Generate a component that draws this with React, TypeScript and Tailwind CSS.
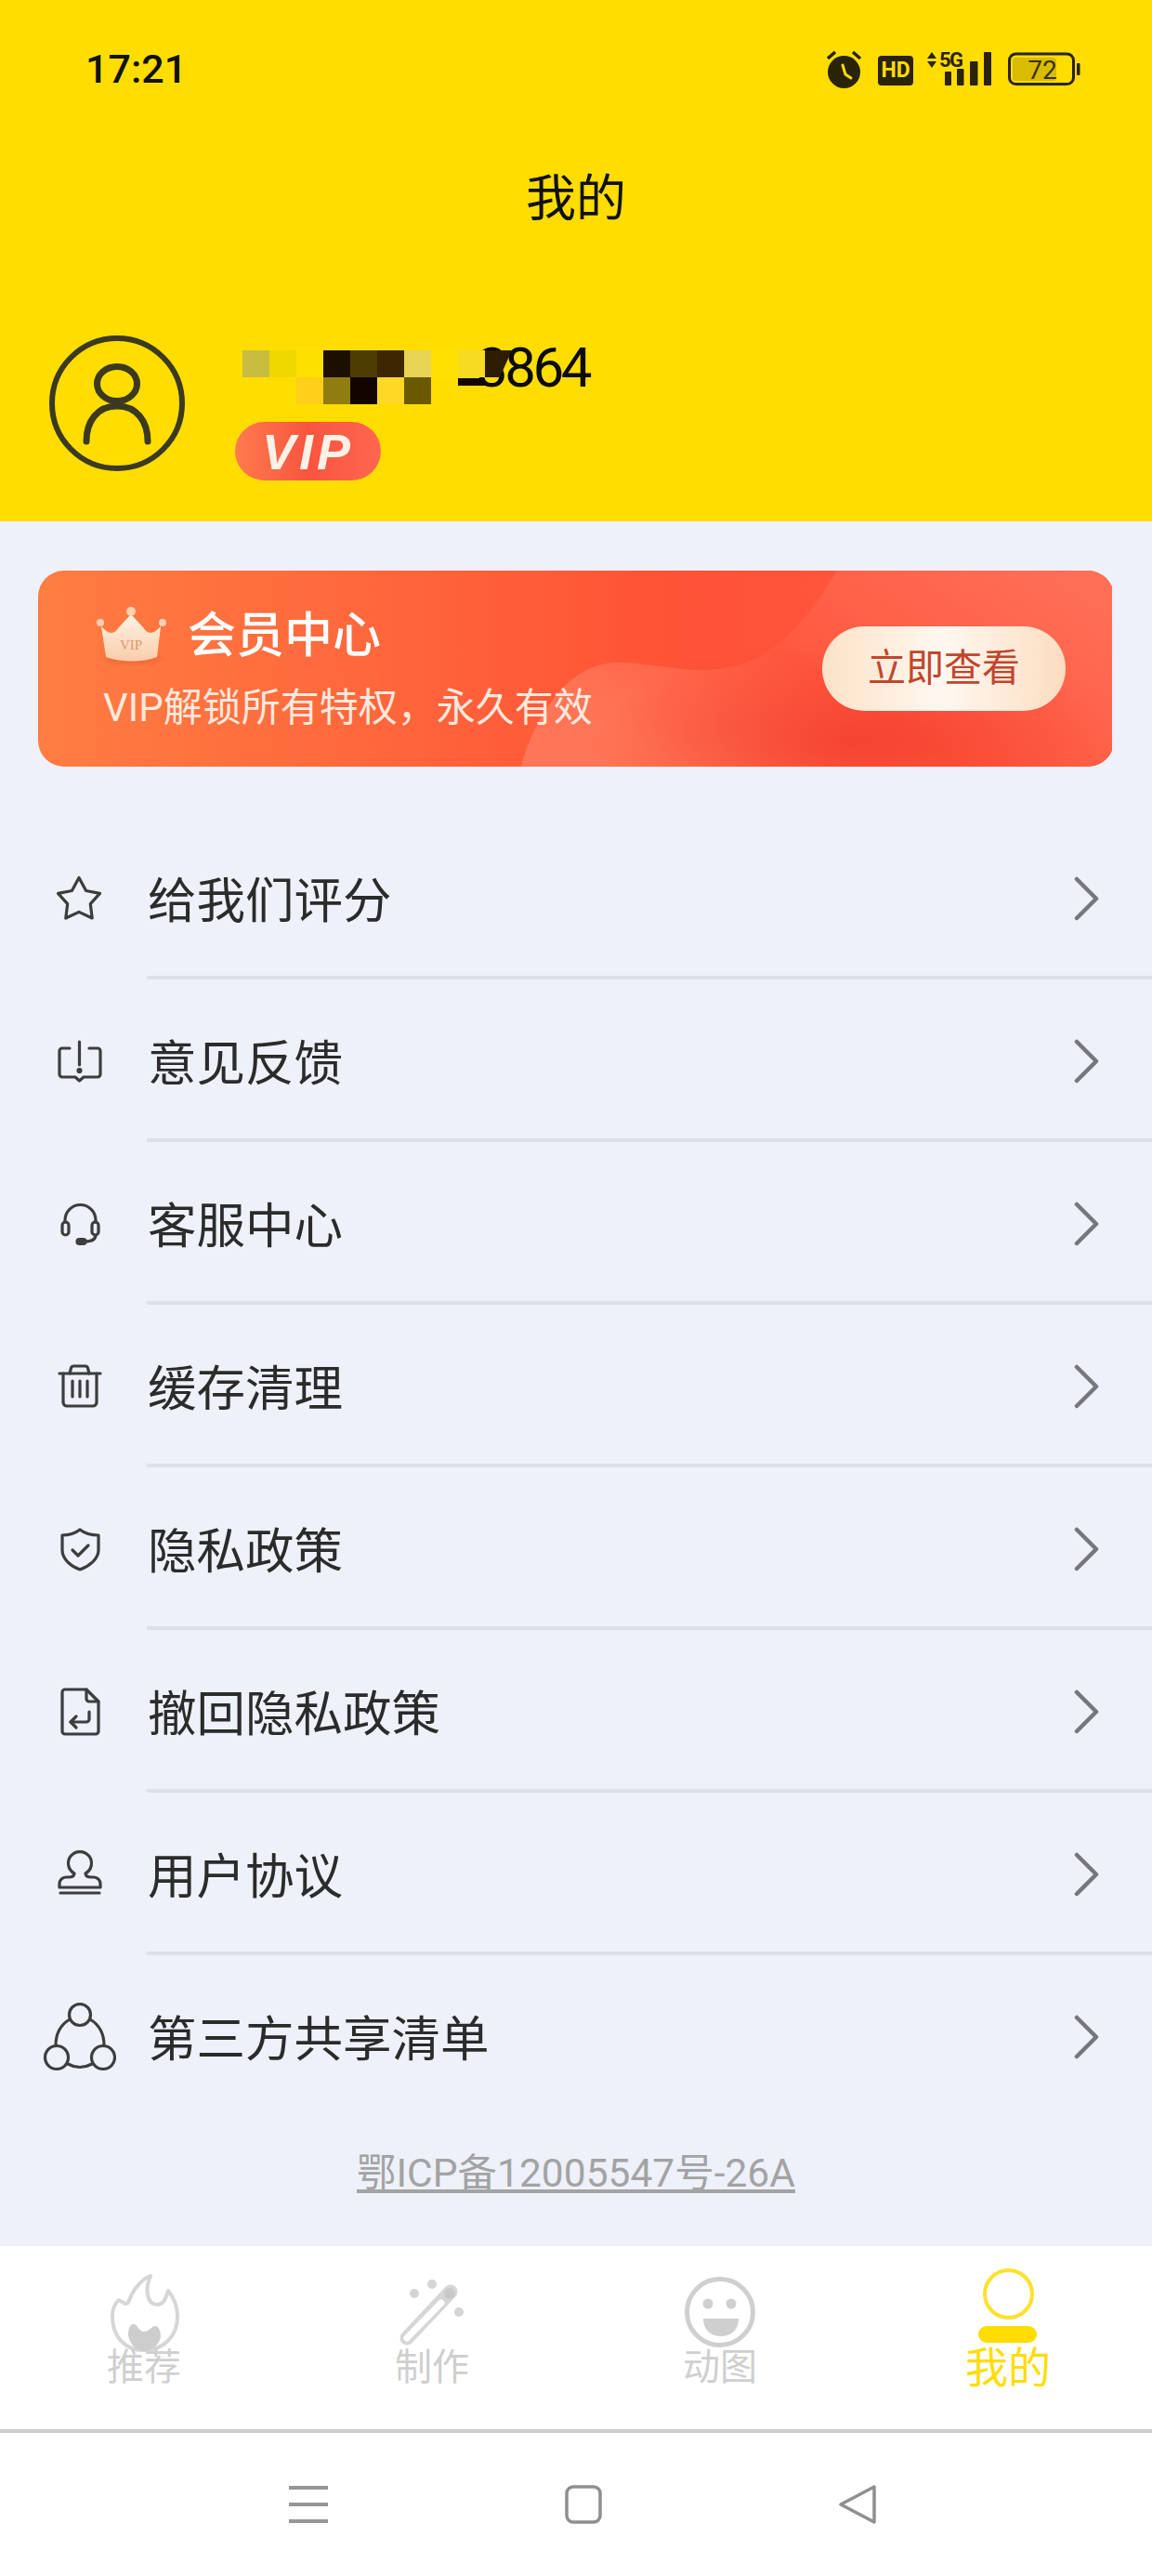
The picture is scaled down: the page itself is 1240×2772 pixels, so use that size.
import type { ReactNode } from "react";

const iconProps = { width: 80, height: 80, viewBox: "0 0 80 80", fill: "none", stroke: "#3d3d3d", strokeWidth: 3.2, strokeLinecap: "round", strokeLinejoin: "round" } as const;

const menu: { label: string; icon: ReactNode }[] = [
  { label: "给我们评分", icon: <svg {...iconProps}><path d="M40 16.5 47.6 30.5 62.5 33.4 52.3 44.6 54.2 60 40 53.4 25.8 60 27.7 44.6 17.5 33.4 32.4 30.5Z" /></svg> },
  {
    label: "意见反馈",
    icon: (
      <svg {...iconProps}>
        <path d="M30 25H22a3 3 0 0 0-3 3v25a3 3 0 0 0 3 3h14l4.500 4 4.500-4h15a3 3 0 0 0 3-3V28a3 3 0 0 0-3-3H51" />
        <path d="M40.500 18V43" />
        <circle cx="40.500" cy="49" r="1.500" fill="#3d3d3d" />
      </svg>
    )
  },
  {
    label: "客服中心",
    icon: (
      <svg {...iconProps}>
        <path d="M25 37v-2a16.500 16.500 0 0 1 33 0v2" />
        <rect x="22" y="37" width="7" height="14" rx="3.500" />
        <rect x="54" y="37" width="7" height="14" rx="3.500" />
        <path d="M58 51c0 5-5 7-12 7" />
        <rect x="38" y="55.500" width="9" height="5" rx="2.500" fill="#3d3d3d" />
      </svg>
    )
  },
  {
    label: "缓存清理",
    icon: (
      <svg {...iconProps}>
        <path d="M19 25H63" />
        <path d="M30 25l1.500-6a3 3 0 0 1 3-2h12a3 3 0 0 1 3 2l1.500 6" />
        <path d="M23 25V56a4 4 0 0 0 4 4H55a4 4 0 0 0 4-4V25" />
        <path d="M33 33V50M41 33V50M49 33V50" />
      </svg>
    )
  },
  {
    label: "隐私政策",
    icon: (
      <svg {...iconProps}>
        <path d="M41 18C36 22 28 24 22 24V40C22 50 32 58 41 61 50 58 61 50 61 40V24C54 24 46 22 41 18Z" />
        <path d="M33 40 39 46 50 35" />
      </svg>
    )
  },
  {
    label: "撤回隐私政策",
    icon: (
      <svg {...iconProps}>
        <path d="M25 15H48L61 28V60a3 3 0 0 1-3 3H25a3 3 0 0 1-3-3V18a3 3 0 0 1 3-3Z" />
        <path d="M48 15V25a3 3 0 0 0 3 3H61" />
        <path d="M51 39V47a3 3 0 0 1-3 3H31" />
        <path d="M37 44 31 50 37 56" />
      </svg>
    )
  },
  {
    label: "用户协议",
    icon: (
      <svg {...iconProps}>
        <path d="M35 38A12.500 12.500 0 1 1 47 38C47 41 49 42 53 42H56a7 7 0 0 1 7 7V53H19V49a7 7 0 0 1 7-7H29C33 42 35 41 35 38Z" />
        <path d="M20 59H62" />
      </svg>
    )
  },
  {
    label: "第三方共享清单",
    icon: (
      <svg {...iconProps}>
        <circle cx="41" cy="15" r="11.500" />
        <circle cx="16" cy="61" r="12.500" />
        <circle cx="66" cy="61" r="12.500" />
        <path d="M30 20C20 26 15 35 15 48" />
        <path d="M52 20C62 26 67 35 67 48" />
        <path d="M28 68Q41 75 54 68" />
      </svg>
    )
  }
];

const mosaicTop = ["#C9BD3F", "#EFD800", "#FCE000", "#1C0F00", "#4D3D00", "#3D2600", "#E8D455", "#FFE000", "#F7DB20"];
const mosaicBottom = ["#FFDD00", "#FFDD00", "#FFCF1A", "#8F7D10", "#120500", "#FFD826", "#6B5900"];

function StatusIcons() {
  return (
    <svg width="273" height="44" viewBox="890 52 273 44" className="font-['Roboto',sans-serif]">
      <circle cx="908.500" cy="77.500" r="17.500" fill="#2a2306" />
      <path d="M891 63 899 56M926 63 918 56" stroke="#2a2306" strokeWidth="3.500" />
      <path d="M907 70 910 80 916 84" stroke="#FFDD00" strokeWidth="3" fill="none" strokeLinecap="round" />
      <rect x="945" y="60" width="38" height="32" rx="4" fill="#2a2306" />
      <text x="964" y="83" textAnchor="middle" fontSize="23" fontWeight="700" fill="#FFDD00">HD</text>
      <path d="M998 63 1003 56 1008 63ZM998 66 1008 66 1003 73Z" fill="#2a2306" />
      <text x="1011" y="72" fontSize="22" fontWeight="700" fill="#2a2306" letterSpacing="-1.500">5G</text>
      <rect x="1017" y="77" width="7" height="15" rx="1" fill="#2a2306" />
      <rect x="1030" y="74" width="7.500" height="18" rx="1" fill="#2a2306" />
      <rect x="1044" y="66" width="8.500" height="26" rx="1" fill="#2a2306" />
      <rect x="1059" y="56" width="8" height="36" rx="1" fill="#2a2306" />
      <rect x="1086.500" y="58" width="69" height="32.500" rx="7" fill="none" stroke="#2a2306" strokeWidth="3" />
      <rect x="1090" y="62" width="47" height="25" rx="3" fill="#D9BC00" />
      <text x="1122" y="85" textAnchor="middle" fontSize="28" fill="#3a3210">72</text>
      <rect x="1159" y="68" width="3.500" height="13" rx="1" fill="#2a2306" />
    </svg>
  );
}

function Avatar() {
  return (
    <svg width="146" height="146" viewBox="0 0 146 146" fill="none" stroke="#3b3a20" strokeLinecap="round" className="shrink-0">
      <circle cx="73" cy="73" r="70" strokeWidth="6" />
      <ellipse cx="73" cy="52" rx="21.500" ry="18.500" strokeWidth="7" />
      <path d="M40 114C40 92 52 76 73 76S106 92 106 114" strokeWidth="7" />
    </svg>
  );
}

function Crown() {
  return (
    <svg width="78" height="64" viewBox="0 0 78 64" className="shrink-0">
      <defs>
        <linearGradient id="crown" x1="0" y1="0" x2="0" y2="1">
          <stop offset="0" stopColor="#FFF3E4" />
          <stop offset="1" stopColor="#F8CDAA" />
        </linearGradient>
        <radialGradient id="crownShadow" cx="0.5" cy="0.5" r="0.5">
          <stop offset="0" stopColor="#D9552A" stopOpacity="0.7" />
          <stop offset="1" stopColor="#D9552A" stopOpacity="0" />
        </radialGradient>
      </defs>
      <ellipse cx="39" cy="56" rx="38" ry="8" fill="url(#crownShadow)" />
      <path d="M11 54 6 21C14 30 20 30 25 22L38 8 51 22C56 30 62 30 70 21L66 54C50 60 28 60 11 54Z" fill="url(#crown)" />
      <circle cx="38" cy="5" r="5" fill="#F9D2B2" />
      <circle cx="5" cy="17" r="4" fill="#F9D2B2" />
      <circle cx="72" cy="17" r="4" fill="#F9D2B2" />
      <text x="38" y="46" textAnchor="middle" fontSize="15" fill="#D99A70" className="font-['Liberation_Serif',serif]">VIP</text>
    </svg>
  );
}

function BannerArt() {
  return (
    <svg className="absolute inset-0" width="1156" height="211" viewBox="0 0 1156 211" preserveAspectRatio="none">
      <defs>
        <linearGradient id="base" x1="0" y1="0" x2="1" y2="0">
          <stop offset="0" stopColor="#FF7D42" />
          <stop offset="0.6" stopColor="#FF5236" />
          <stop offset="1" stopColor="#FF5A42" />
        </linearGradient>
        <linearGradient id="wave" x1="0.05" y1="0.6" x2="1" y2="0.1">
          <stop offset="0" stopColor="#FF7556" />
          <stop offset="0.4" stopColor="#FF5940" />
          <stop offset="1" stopColor="#FF6F58" />
        </linearGradient>
        <radialGradient id="spot" cx="0.5" cy="0.5" r="0.5">
          <stop offset="0" stopColor="#F23A2B" stopOpacity="0.75" />
          <stop offset="1" stopColor="#F23A2B" stopOpacity="0" />
        </radialGradient>
      </defs>
      <rect width="1156" height="211" fill="url(#base)" />
      <path d="M520 211C530 170 565 98 625 99 670 100 700 112 740 105 795 95 830 50 860 0H1156V211Z" fill="url(#wave)" />
      <ellipse cx="880" cy="185" rx="280" ry="110" fill="url(#spot)" />
    </svg>
  );
}

function FlameIcon() {
  return (
    <svg width="96" height="96" viewBox="0 0 96 96">
      <path d="M55 14C47 17 38 26 33 38 31 44 29 45 26 43L21 40C16 44 14 50 14 58 14 80 28 94 48 94 70 94 84 78 84 58 84 46 79 36 74 30 72 36 70 45 62 45 52 45 48 30 55 14Z" fill="#fff" stroke="#d6d6d6" strokeWidth="4" strokeLinejoin="round" />
      <path d="M31 78C31 70 33 66 37 66 41 66 42 74 48 74 54 74 56 68 60 68 64 68 66 74 66 80 64 88 56 95 48 95 40 95 33 88 31 78Z" fill="#cdcdcd" />
    </svg>
  );
}

function WandIcon() {
  return (
    <svg width="96" height="96" viewBox="0 0 96 96" fill="#d4d4d4">
      <path d="M68 31 21 81" stroke="#d6d6d6" strokeWidth="15" strokeLinecap="round" />
      <path d="M58 43 21 81" stroke="#fff" strokeWidth="7" strokeLinecap="round" />
      <circle cx="67" cy="33" r="6" fill="#c9c9c9" />
      <circle cx="29" cy="33" r="5" />
      <circle cx="48" cy="23" r="5" />
      <circle cx="77" cy="53" r="5" />
    </svg>
  );
}

function FaceIcon() {
  return (
    <svg width="96" height="96" viewBox="0 0 96 96">
      <circle cx="48" cy="53" r="35.500" fill="#fff" stroke="#cfcfcf" strokeWidth="5" />
      <circle cx="35" cy="44" r="5.500" fill="#cfcfcf" />
      <circle cx="60" cy="44" r="5.500" fill="#cfcfcf" />
      <path d="M30 60H68C68 72 60 79 49 79 38 79 30 72 30 60Z" fill="#cfcfcf" />
    </svg>
  );
}

function ProfileIcon() {
  return (
    <svg width="96" height="96" viewBox="0 0 96 96">
      <circle cx="48.500" cy="33.500" r="25.500" fill="none" stroke="#FFE02E" strokeWidth="4" />
      <rect x="16" y="68" width="63" height="18" rx="9" fill="#FFDD00" />
    </svg>
  );
}

const tabs = [
  { label: "推荐", icon: <FlameIcon />, active: false },
  { label: "制作", icon: <WandIcon />, active: false },
  { label: "动图", icon: <FaceIcon />, active: false },
  { label: "我的", icon: <ProfileIcon />, active: true }
];

export default function App() {
  return (
    <div className="flex h-[2772px] w-[1240px] flex-col overflow-hidden bg-[#EEF1F9] font-['Roboto','Noto_Sans_CJK_SC',sans-serif] text-[#2b2b2b]">
      <header className="h-[561px] shrink-0 bg-[#FFDD00]">
        <div className="flex h-[148px] items-center justify-between pl-[92px] pr-[77px]">
          <span className="text-[43px] font-medium leading-none text-[#111]">17:21</span>
          <StatusIcons />
        </div>
        <h1 className="flex h-[128px] items-center justify-center pt-[5px] text-[54px] font-normal leading-none text-[#111]">我的</h1>
        <div className="mt-[85px] flex pl-[53px]">
          <Avatar />
          <div className="ml-[54px] flex flex-col items-start">
            <div className="relative ml-[8px] mt-[4px] w-[373px] text-right text-[60px] leading-[60px] tracking-[-3.5px] text-[#0b0b0b]">
              <span className="relative top-[1px]">3864</span>
              <div className="absolute left-0 top-[12px] flex flex-col">
                <div className="flex">
                  {mosaicTop.map((color, i) => (
                    <div key={i} className="h-[29px] w-[29px]" style={{ backgroundColor: color }} />
                  ))}
                  <div className="h-[29px] w-[29px] bg-[#2E1C00] [clip-path:polygon(0_0,100%_0,55%_100%,0_100%)]" />
                </div>
                <div className="flex">
                  {mosaicBottom.map((color, i) => (
                    <div key={i} className="h-[29px] w-[29px]" style={{ backgroundColor: color }} />
                  ))}
                  <div className="ml-[29px] mt-[1px] h-[8px] w-[29px] bg-[#120500]" />
                </div>
              </div>
            </div>
            <div className="mt-[29px] flex h-[63px] w-[157px] items-center justify-center rounded-full bg-gradient-to-r from-[#FF7A4D] via-[#F8553F] to-[#FF6650] font-['Liberation_Sans',sans-serif] text-[54px] font-bold italic leading-none tracking-[4px] text-[#FFF1E6]">
              VIP
            </div>
          </div>
        </div>
      </header>

      <section className="relative mx-[41px] mt-[53px] h-[211px] shrink-0 overflow-hidden rounded-[28px]">
        <BannerArt />
        <div className="relative flex h-full items-center justify-between pl-[62px] pr-[52px]">
          <div className="flex flex-col">
            <div className="flex items-center gap-[21px]">
              <Crown />
              <span className="text-[52px] font-medium leading-[60px] text-white">会员中心</span>
            </div>
            <p className="ml-[8px] mt-[20px] text-[42px] leading-[50px] text-[#FFE9DE]">VIP解锁所有特权，永久有效</p>
          </div>
          <button className="flex h-[91px] w-[262px] items-center justify-center rounded-full bg-gradient-to-r from-[#FCE2C8] via-[#FFF8F0] to-[#FBDDC0] text-[41px] text-[#C2452E]">
            立即查看
          </button>
        </div>
      </section>

      <ul className="mt-[54px] shrink-0">
        {menu.map((item, i) => (
          <li key={item.label}>
            <div className="flex h-[171px] items-center pl-[45px] pr-[57px] pt-[7px]">
              <span className="mr-[34px] h-[80px] w-[80px] shrink-0">{item.icon}</span>
              <span className="mt-[4px] text-[52.5px] leading-none text-[#2b2b2b]">{item.label}</span>
              <svg className="ml-auto" width="28" height="50" viewBox="0 0 28 50" fill="none" stroke="#75777c" strokeWidth="4.500" strokeLinecap="round" strokeLinejoin="round">
                <path d="M4 3 25 24 4 45" />
              </svg>
            </div>
            {i < menu.length - 1 && <div className="ml-[158px] h-[4px] bg-[#DCE0E9]" />}
          </li>
        ))}
      </ul>

      <div className="flex flex-1 items-start justify-center pt-[38px]">
        <a className="text-[42.5px] leading-[52px] text-[#a3a3a3] underline">鄂ICP备12005547号-26A</a>
      </div>

      <nav className="grid h-[201px] shrink-0 grid-cols-4 border-b-4 border-[#cccccc] bg-white pt-[18px]">
        {tabs.map((tab) => (
          <div key={tab.label} className="flex flex-col items-center">
            <span className="h-[96px] w-[96px]">{tab.icon}</span>
            <span className={tab.active ? "-mt-[6px] text-[46px] leading-[46px] text-[#FFDD00]" : "-mt-[6px] text-[40px] leading-[46px] text-[#cfcfcf]"}>{tab.label}</span>
          </div>
        ))}
      </nav>

      <div className="flex h-[154px] shrink-0 items-center justify-center gap-[255px] bg-white pl-[14px]">
        <svg width="42" height="42" viewBox="0 0 42 42" fill="none" stroke="#969696" strokeWidth="4">
          <path d="M0 3H42M0 21H42M0 39H42" />
        </svg>
        <svg width="40" height="42" viewBox="0 0 40 42" fill="none" stroke="#8f8f8f" strokeWidth="3.500">
          <rect x="2" y="2" width="36" height="38" rx="7" />
        </svg>
        <svg width="40" height="42" viewBox="0 0 40 42" fill="none" stroke="#8f8f8f" strokeWidth="3.500" strokeLinejoin="round">
          <path d="M38 2V40L2 21Z" />
        </svg>
      </div>
    </div>
  );
}
